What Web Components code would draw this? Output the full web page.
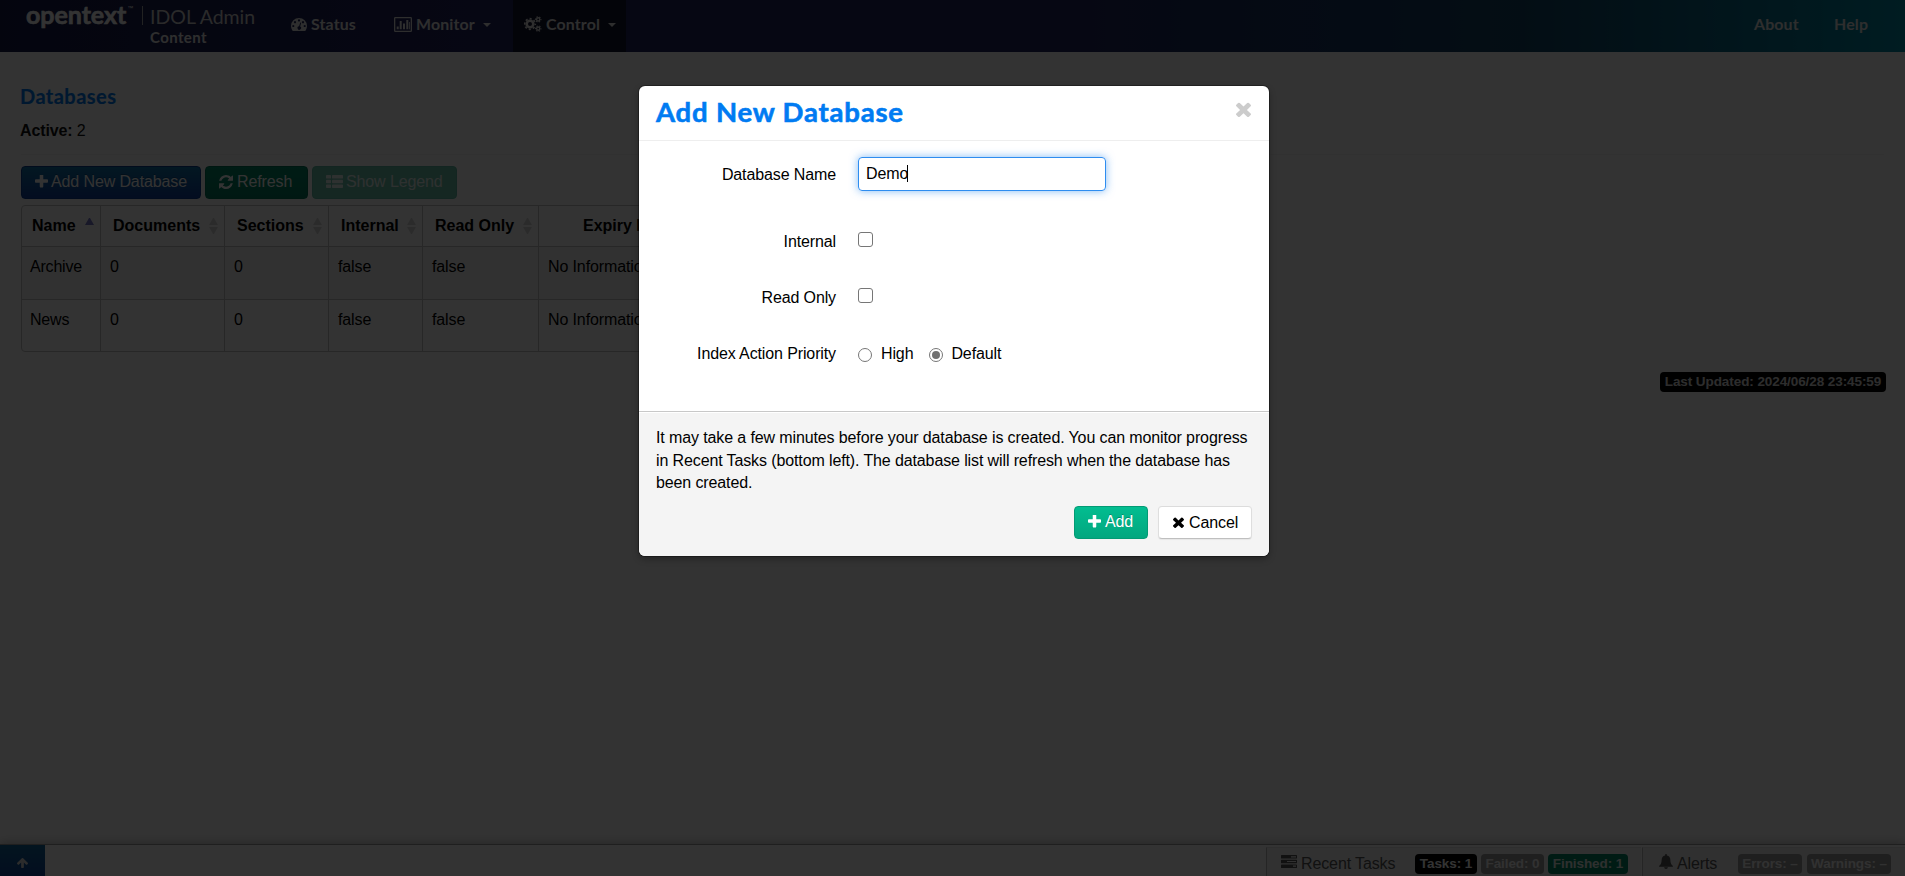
<!DOCTYPE html>
<html lang="en">
<head>
<meta charset="utf-8">
<title>IDOL Admin</title>
<style>
html,body{margin:0;height:100%;overflow:hidden;background:#fff}
body{font:16px/22.857px "Liberation Sans",Arial,sans-serif;letter-spacing:-.118px;color:#000}
</style>
</head>
<body>
<idol-app></idol-app>
<script>
const define=(name,html,setup)=>customElements.define(name,class extends HTMLElement{
  connectedCallback(){
    if(this.shadowRoot)return;
    const t=document.createElement('template');
    t.innerHTML=typeof html==='function'?html(this):html;
    this.attachShadow({mode:'open'}).append(t.content.cloneNode(true));
    if(setup)setup(this,this.shadowRoot);
  }
});

const gear=(cx,cy,r,w,teeth,tl)=>{
  const o=r+w/2+tl/2-.15,c=2*Math.PI*o/teeth;
  return `<circle cx="${cx}" cy="${cy}" r="${r}" fill="none" stroke="currentColor" stroke-width="${w}"/><circle cx="${cx}" cy="${cy}" r="${o}" fill="none" stroke="currentColor" stroke-width="${tl}" stroke-dasharray="${c*.5} ${c*.5}" stroke-dashoffset="${c*.25}"/>`;
};
const ICONS={
  plus:['192 192 1408 1408','<path d="M1600 736v192q0 40-28 68t-68 28h-416v416q0 40-28 68t-68 28h-192q-40 0-68-28t-28-68v-416h-416q-40 0-68-28t-28-68v-192q0-40 28-68t68-28h416v-416q0-40 28-68t68-28h192q40 0 68 28t28 68v416h416q40 0 68 28t28 68z"/>'],
  refresh:['128 128 1536 1536','<path d="M1639 1056q0 5-1 7-64 268-268 434.5t-478 166.5q-146 0-282.5-55t-243.5-157l-129 129q-19 19-45 19t-45-19-19-45v-448q0-26 19-45t45-19h448q26 0 45 19t19 45-19 45l-137 137q71 66 161 102t187 36q134 0 250-65t186-179q11-17 53-117 8-23 30-23h192q13 0 22.5 9.5t9.5 22.5zm25-800v448q0 26-19 45t-45 19h-448q-26 0-45-19t-19-45 19-45l138-138q-148-137-349-137-134 0-250 65t-186 179q-11 17-53 117-8 23-30 23h-199q-13 0-22.5-9.5t-9.5-22.5v-7q65-268 270-434.5t480-166.5q146 0 284 55.5t245 156.5l130-129q19-19 45-19t45 19 19 45z"/>'],
  times:['302 302 1188 1252','<path d="M1490 1322q0 40-28 68l-136 136q-28 28-68 28t-68-28l-294-294-294 294q-28 28-68 28t-68-28l-136-136q-28-28-28-68t28-68l294-294-294-294q-28-28-28-68t28-68l136-136q28-28 68-28t68 28l294 294 294-294q28-28 68-28t68 28l136 136q28 28 28 68t-28 68l-294 294 294 294q28 28 28 68z"/>'],
  up:['117 192 1558 1472','<path d="M1675 971q0 51-37 90l-75 75q-38 38-91 38-54 0-90-38l-294-293v704q0 52-37.5 84.5t-90.5 32.5h-128q-53 0-90.5-32.5t-37.5-84.5v-704l-294 293q-36 38-90 38t-90-38l-75-75q-38-38-38-90 0-53 38-91l651-651q35-37 90-37 54 0 91 37l651 651q37 39 37 91z"/>'],
  list:['0 0 17 13','<rect width="5" height="3.6" rx=".7"/><rect x="6" width="11" height="3.6" rx=".7"/><rect y="4.7" width="5" height="3.6" rx=".7"/><rect x="6" y="4.7" width="11" height="3.6" rx=".7"/><rect y="9.4" width="5" height="3.6" rx=".7"/><rect x="6" y="9.4" width="11" height="3.6" rx=".7"/>'],
  tasks:['0 0 16 13','<path fill-rule="evenodd" d="M.6 0h14.8q.6 0 .6.6v2.400q0 .6-.6.6H.6q-.6 0-.6-.6V.6Q0 0 .6 0zM10 1.200v1.200h5V1.200zM.6 4.700h14.800q.6 0 .6.6v2.400q0 .6-.6.6H.6q-.6 0-.6-.6V5.300q0-.6.6-.6zM6 5.900v1.200h9V5.900zM.6 9.400h14.800q.6 0 .6.6v2.400q0 .6-.6.6H.6q-.6 0-.6-.6V10q0-.6.6-.6zM12 10.600v1.200h3v-1.200z"/>'],
  bell:['0 0 16 16','<path d="M7 .9Q7 0 8 0t1 .9V1.600q4 .8 4 5.100 0 4.300 3 6 0 1-1 1H1q-1 0-1-1 3-1.700 3-6Q3 2.400 7 1.600zM5.800 14.200h4.400Q10 16 8 16t-2.200-1.800z"/>'],
  gauge:['0 0 16 13','<path fill-rule="evenodd" d="M8 0a8 8 0 0 1 8 8q0 2.500-1.300 4.500-.3.400-.8.4H2.100q-.5 0-.8-.4Q0 10.500 0 8a8 8 0 0 1 8-8zM2.300 6.900a1.100 1.100 0 1 0 .01 0zM4 3a1.100 1.100 0 1 0 .01 0zM8 1.300a1.100 1.100 0 1 0 .01 0zM12 3a1.100 1.100 0 1 0 .01 0zM13.700 6.900a1.100 1.100 0 1 0 .01 0zM9.300 4.500L8.100 8.300a1.700 1.700 0 1 0 1 .2L10.200 4.800z"/>'],
  chart:['0 0 18 15','<path fill-rule="evenodd" d="M1.300 0h15.400Q18 0 18 1.300v12.400q0 1.300-1.300 1.300H1.300Q0 15 0 13.700V1.300Q0 0 1.300 0zM1.300 1.300v12.400h15.400V1.300z"/><path d="M2.700 9.500h2v2.800h-2zM5.700 4h2v8.300h-2zM9 6.500h2v5.800H9zM12.300 2.900h2v9.400h-2zM15 5h.8v7.300H15z"/>'],
  cogs:['0 0 18 16',gear(6,8,3.300,2.600,8,1.700)+gear(14.200,3.400,1.600,1.400,6,1.100)+gear(14.200,12.600,1.600,1.400,6,1.100)]
};
define('ui-icon',el=>{
  const [vb,body]=ICONS[el.getAttribute('name')],[w,h]=el.getAttribute('size').split(' ');
  return `<style>:host{display:block;flex:none;width:${w}px;height:${h}px}svg{display:block}</style><svg width="${w}" height="${h}" viewBox="${vb}" preserveAspectRatio="none" fill="currentColor">${body}</svg>`;
});

define('ui-button',`<style>
:host{display:flex;box-sizing:border-box;height:33px;border-radius:4px;border:1px solid #c9c9c9;align-items:flex-start;white-space:nowrap}
::slotted(ui-icon){margin:var(--im,8px) var(--ig,3px) 0 var(--il,13px)}
.t{padding-top:var(--tt,4px)}
:host([kind=primary]){background:linear-gradient(#0f75a9,#0f3f9f);border-color:#0b3f8f;color:#fff;text-shadow:0 -1px 0 rgba(0,0,0,.25)}
:host([kind=success]){background:linear-gradient(#02bd90,#02a77f);border-color:#029a74;color:#fff;text-shadow:0 -1px 0 rgba(0,0,0,.25)}
:host([kind=dim]){background:linear-gradient(#018a68,#017a5d);border-color:#017558;color:#fff}
:host([kind=off]){background:#6bc1ab;border-color:#5fbaa3;color:#e6f3ef}
:host([kind=plain]){background:#fff;border-color:#dcdcdc #dedede #bfbfbf;box-shadow:0 1px 1px rgba(0,0,0,.06)}
</style><slot name="icon"></slot><span class="t"><slot></slot></span>`);

define('ui-badge',`<style>
:host{display:block;box-sizing:border-box;flex:none;height:20px;border-radius:4px;font:bold 13.500px/20px "Liberation Sans",Arial,sans-serif;letter-spacing:-.08px;color:var(--fg,#fff);background:var(--bg,#000);text-align:center;white-space:nowrap}
</style><slot></slot>`);

define('nav-item',`<style>
:host{display:flex;box-sizing:border-box;height:52px;padding-top:14px;align-items:flex-start;font:bold 15.900px/20px Lato,sans-serif;letter-spacing:.15px;color:#e4e4e4;white-space:nowrap}
i{display:none;margin:9px 0 0 8px;border:4px solid transparent;border-top-color:currentColor;border-bottom:0}
:host([menu]) i{display:block}
</style><slot name="icon"></slot><span><slot></slot></span><i></i>`);

define('nav-bar',`<style>
:host{display:flex;height:52px;flex:none;background:linear-gradient(90deg,#171c49 0%,#20235f 25%,#20245f 55%,#134466 80%,#008ba6 100%);color:#fff}
.logo{width:116px;padding-left:26px;font:bold 25px/29px Lato,sans-serif;letter-spacing:-.05px;-webkit-text-stroke:.6px;color:#fff;display:flex}
sup{font:6px/16px "Liberation Sans",sans-serif;letter-spacing:0;margin-left:1px;-webkit-text-stroke:0}
.bar{width:1px;height:19px;background:#aaa;margin-top:6px}
.name{width:142px;padding-left:7px;font:19.500px/24px Lato,sans-serif;letter-spacing:0;color:#d2d2d2;padding-top:5px;white-space:nowrap}
.name b{display:block;font:bold 15px/18px Lato,sans-serif;letter-spacing:.4px;margin-top:-1px;color:#e6e6e6}
.s{width:103px}.m{width:119px}.c{width:113px;padding-left:11px;background:#10142f}
.s{margin-left:-1px}
.s ui-icon{margin:4px 4px 0 0}.m ui-icon{margin:3px 4px 0 0}.c ui-icon{margin:2px 4px 0 0}
.sp{flex:1}.a{width:80px}.h{width:71px}
</style>
<div class="logo"><span>opentext</span><sup>™</sup></div><div class="bar"></div>
<div class="name">IDOL Admin<b>Content</b></div>
<nav-item class="s"><ui-icon slot="icon" name="gauge" size="16 13"></ui-icon>Status</nav-item>
<nav-item class="m" menu><ui-icon slot="icon" name="chart" size="18 15"></ui-icon>Monitor</nav-item>
<nav-item class="c" menu><ui-icon slot="icon" name="cogs" size="18 16"></ui-icon>Control</nav-item>
<div class="sp"></div><nav-item class="a">About</nav-item><nav-item class="h">Help</nav-item>`);

define('sort-mark',`<style>
:host{display:flex;flex-direction:column;gap:2px;flex:none;width:9px}
i{border:4.500px solid transparent}
.u{border-top:0;border-bottom:7px solid #d8d8d8}.d{border-bottom:0;border-top:7px solid #d8d8d8}
:host([asc]) .u{border-bottom-color:#7777c8}:host([asc]) .d{visibility:hidden}
</style><i class="u"></i><i class="d"></i>`);

define('data-table',()=>{
  const heads=['Name','Documents','Sections','Internal','Read Only','Expiry Hours'];
  const row=n=>[n,'0','0','false','false','No Information'].map(v=>`<div class="td">${v}</div>`).join('');
  return `<style>
:host{display:block;width:700px;box-sizing:border-box;border:1px solid #c4c4c4;border-radius:4px;overflow:hidden}
.r{display:grid;grid-template-columns:78px 124px 104px 94px 116px 1fr}
.r+.r{border-top:1px solid #c4c4c4}
.r>div{box-sizing:border-box;white-space:nowrap;border-left:1px solid #c4c4c4}
.r>div:first-child{border-left:0}
.th{height:40px;font-weight:bold;letter-spacing:0;display:flex;justify-content:space-between;padding:9px 6px 0 12px}
.th:first-child{padding-left:10px}
.th:last-child{padding-left:44px}
.th sort-mark{margin-top:3px}
.td{height:52px;padding:9px 0 0 9px}
.td:first-child{padding-left:8px;letter-spacing:-.2px}
.odd{background:#f5f5f5}.last .td{height:51px}
</style><div class="r">${heads.map((h,i)=>`<div class="th">${h}<sort-mark ${i?'':'asc'}></sort-mark></div>`).join('')}</div><div class="r odd">${row('Archive')}</div><div class="r last">${row('News')}</div>`;
});

define('database-page',`<style>
:host{display:block;flex:1;padding:0 21px}
h1{margin:0 0 0 -1px;padding-top:32px;font:bold 20px/24px Lato,sans-serif;letter-spacing:.45px;-webkit-text-stroke:.2px;color:#0079ef}
p{margin:12px 0 0 -1px;color:#111}
hr{margin:11px 0 0;border:0;border-top:1px solid #f5f5f5}
.tools{display:flex;gap:4px;margin-top:11px}
.tools>:nth-child(1){width:180px}.tools>:nth-child(2){width:103px}.tools>:nth-child(3){width:145px}
data-table{margin-top:6px}
.u{display:flex;justify-content:flex-end;margin:20px -2px 0 0}
ui-badge{width:226px;--fg:#e0e0e0}
</style>
<h1>Databases</h1><p><b>Active:</b> 2</p><hr>
<div class="tools">
<ui-button kind="primary"><ui-icon slot="icon" name="plus" size="13 13"></ui-icon>Add New Database</ui-button>
<ui-button kind="dim"><ui-icon slot="icon" name="refresh" size="14 14"></ui-icon><span style="margin-left:1px">Refresh</span></ui-button>
<ui-button kind="off"><ui-icon slot="icon" name="list" size="17 13"></ui-icon>Show Legend</ui-button>
</div>
<data-table></data-table>
<div class="u"><ui-badge>Last Updated: 2024/06/28 23:45:59</ui-badge></div>`);

define('status-bar',`<style>
:host{display:flex;box-sizing:border-box;height:32px;flex:none;border-top:1px solid #999;background:#fff;box-shadow:0 -2px 10px rgba(0,0,0,.22);color:#555}
.top{width:45px;background:linear-gradient(#10679a,#0f459b);color:#ddd;display:flex;justify-content:center;padding-top:13px;box-sizing:border-box}
.sp{flex:1}
.g{display:flex;box-sizing:border-box;margin-top:2px;border-left:1px solid #bbb;border-top:1px solid #e3e3e3;background:#f3f3f3;height:29px;white-space:nowrap}
.g .t{padding-top:5px}
.r{width:375px;padding-left:14px;background:#f5f5f5}.al{width:263px;padding-left:16px;margin-left:1px;background:#ededed}
.r ui-icon{margin:7px 4px 0 0}.al ui-icon{margin:6px 4px 0 0}
.r .t{width:114px}.al .t{width:61px}
ui-badge{margin:6px 4px 0 0}.gray{--bg:#9a9a9a;--fg:#f4f4f4}
</style>
<div class="top"><ui-icon name="up" size="11 10"></ui-icon></div><div class="sp"></div>
<div class="g r"><ui-icon name="tasks" size="16 13"></ui-icon><span class="t">Recent Tasks</span>
<ui-badge style="width:62px">Tasks: 1</ui-badge><ui-badge class="gray" style="width:63px">Failed: 0</ui-badge><ui-badge style="width:80px;--bg:#018763;--fg:#e4edea">Finished: 1</ui-badge></div>
<div class="g al"><ui-icon name="bell" size="14 15"></ui-icon><span class="t">Alerts</span>
<ui-badge class="gray" style="width:64px;margin-right:5px">Errors: –</ui-badge><ui-badge class="gray" style="width:84px">Warnings: –</ui-badge></div>`);

define('form-row',el=>`<style>
:host{display:flex;align-items:flex-start;white-space:nowrap}
.l{width:197px;text-align:right;margin-right:22px;padding-top:var(--lt,0)}
</style><div class="l">${el.getAttribute('label')}</div><slot></slot>`);

define('check-mark',`<style>
:host{display:block;box-sizing:border-box;width:15px;height:15px;border:1px solid #767676;border-radius:3px;background:#fff}
:host([radio]){width:14px;height:14px;border-radius:50%}
i{display:none;width:8px;height:8px;margin:2px;border-radius:50%;background:#707070}
:host([on]) i{display:block}
</style><i></i>`);

define('database-dialog',`<style>
:host{display:block;box-sizing:border-box;width:630px;height:470px;background:#fff;border-radius:6px;overflow:hidden;box-shadow:0 0 0 1px rgba(0,0,0,.3),0 3px 7px rgba(0,0,0,.3)}
header{box-sizing:border-box;height:55px;border-bottom:1px solid #eee;padding:8px 18px 0 17px;display:flex;justify-content:space-between}
h2{margin:0;font:bold 27.500px/35px Lato,sans-serif;letter-spacing:.8px;-webkit-text-stroke:.6px;color:#007bf2}
header ui-icon{color:#ccc;margin-top:8px}
.body{box-sizing:border-box;height:270px}
form-row:nth-child(1){padding-top:16px;--lt:7px}
.in{box-sizing:border-box;width:248px;height:34px;border:1px solid #2e8df0;border-radius:4px;box-shadow:0 0 8px rgba(46,141,240,.6);padding:5px 7px;display:flex;line-height:22px}
.in i{width:1px;height:17px;background:#000;margin:2px 0 0 -1px}
form-row:nth-child(2){padding-top:40px}form-row:nth-child(3){padding-top:33px}form-row:nth-child(4){padding-top:33px}
form-row:nth-child(2){height:23px}form-row:nth-child(3){height:23px}
footer{box-sizing:border-box;height:145px;border-top:1px solid #c8c8c8;box-shadow:inset 0 1px #fff;background:#f4f4f4;padding:15px 17px 0}
p{margin:0;white-space:nowrap;line-height:22.500px;height:68.500px}
.b{display:flex;justify-content:flex-end;gap:10px;margin-top:10px}
.rl{margin:0 16px 0 9px}.rl:last-child{margin-left:8px}
</style>
<header><h2>Add New Database</h2><ui-icon name="times" size="15 15"></ui-icon></header>
<div class="body">
<form-row label="Database Name"><div class="in">Demo<i></i></div></form-row>
<form-row label="Internal"><check-mark style="margin-top:1px"></check-mark></form-row>
<form-row label="Read Only"><check-mark style="margin-top:1px"></check-mark></form-row>
<form-row label="Index Action Priority"><check-mark radio style="margin-top:5px"></check-mark><span class="rl">High</span><check-mark radio on style="margin-top:5px"></check-mark><span class="rl">Default</span></form-row>
</div>
<footer><p>It may take a few minutes before your database is created. You can monitor progress<br>in Recent Tasks (bottom left). The database list will refresh when the database has<br>been created.</p>
<div class="b"><ui-button kind="success" style="width:74px;--ig:4px"><ui-icon slot="icon" name="plus" size="13 13"></ui-icon>Add</ui-button><ui-button kind="plain" style="width:94px;--tt:5px;--im:10px;--il:14px;--ig:5px"><ui-icon slot="icon" name="times" size="11 11"></ui-icon>Cancel</ui-button></div></footer>`);

define('idol-app',`<style>
:host{display:block;height:100vh;position:relative}
.page{display:flex;flex-direction:column;height:100%}
.shade{position:absolute;inset:0;background:rgba(0,0,0,.8);display:flex;justify-content:center;align-items:flex-start;padding:86px 0 0 3px}
</style>
<div class="page"><nav-bar></nav-bar><database-page></database-page><status-bar></status-bar></div>
<div class="shade"><database-dialog></database-dialog></div>`);
</script>
</body>
</html>
